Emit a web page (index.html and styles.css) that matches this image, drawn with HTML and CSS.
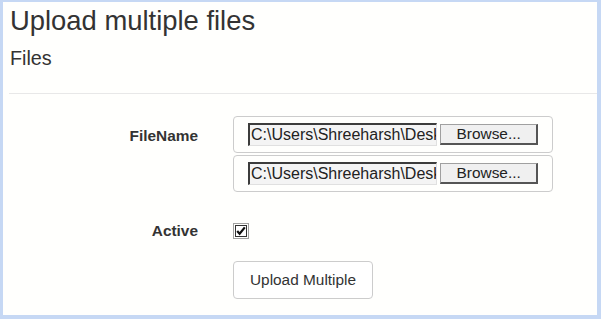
FILE: index.html
```html
<!DOCTYPE html>
<html lang="en">
<head>
    <meta charset="UTF-8">
    <title>Upload multiple files</title>
    <link rel="stylesheet" href="styles.css">
</head>
<body>
    <div class="frame">
        <h3 class="title">Upload multiple files</h3>
        <h4 class="subtitle">Files</h4>
        <hr class="rule">

        <div class="form-row files-row">
            <label class="form-label files-label">FileName</label>
            <div class="controls">
                <div class="file-box">
                    <span class="file-path">C:\Users\Shreeharsh\Desk</span>
                    <span class="browse-btn">Browse...</span>
                </div>
                <div class="file-box">
                    <span class="file-path">C:\Users\Shreeharsh\Desk</span>
                    <span class="browse-btn">Browse...</span>
                </div>
            </div>
        </div>

        <div class="form-row active-row">
            <label class="form-label">Active</label>
            <div class="controls">
                <svg class="check" width="16" height="16" viewBox="0 0 16 16">
                    <rect x="0.5" y="0.5" width="15" height="15" fill="none" stroke="#444" stroke-dasharray="1 1"/>
                    <rect x="2.5" y="2.5" width="11" height="11" fill="#fff" stroke="#333"/>
                    <path d="M4.2 8 L6.6 10.8 L11.8 4.4" fill="none" stroke="#111" stroke-width="2.2"/>
                </svg>
            </div>
        </div>

        <div class="form-row submit-row">
            <div class="form-label"></div>
            <div class="controls">
                <button class="upload-btn">Upload Multiple</button>
            </div>
        </div>
    </div>
</body>
</html>
```

FILE: styles.css
```css
body {
    margin: 0;
    font-family: 'Liberation Sans', Arial, sans-serif;
    color: #333;
    background-color: #fff;
}
.frame {
    box-sizing: border-box;
    width: 601px;
    height: 319px;
    border-style: solid;
    border-color: #c6d8f4;
    border-width: 2px 4px 4px 3px;
    background-color: #fffffd;
    overflow: hidden;
}
.title {
    margin: 4px 0 0 7px;
    font-size: 27.4px;
    font-weight: normal;
    line-height: 1.1;
}
.subtitle {
    margin: 12px 0 0 7px;
    font-size: 19.8px;
    font-weight: normal;
    line-height: 1.1;
}
.rule {
    margin: 23px 0 0 6px;
    border: 0;
    border-top: 1px solid #e8e8e8;
}
.form-row {
    display: flex;
    align-items: flex-start;
}
.form-label {
    width: 195px;
    flex: none;
    text-align: right;
    font-weight: bold;
    font-size: 15.4px;
}
.files-label {
    margin-top: 11px;
}
.controls {
    margin-left: 35px;
    display: flex;
    flex-direction: column;
    gap: 2px;
}
.files-row {
    margin-top: 22px;
}
.file-box {
    box-sizing: border-box;
    width: 320px;
    height: 37px;
    border: 1px solid #ccc;
    border-radius: 4px;
    padding: 0 14px;
    display: flex;
    align-items: center;
    gap: 3px;
}
.file-path {
    box-sizing: border-box;
    width: 190px;
    height: 23px;
    line-height: 20px;
    font-size: 16px;
    color: #222;
    white-space: nowrap;
    overflow: hidden;
    background-color: #f4f4f4;
    border-style: solid;
    border-width: 2px 1px 1px 2px;
    border-color: #3c3c3c #e0e0e0 #e0e0e0 #3c3c3c;
    padding-left: 1px;
}
.browse-btn {
    box-sizing: border-box;
    width: 98px;
    height: 21px;
    line-height: 18px;
    text-align: center;
    font-size: 15.4px;
    color: #222;
    background-color: #f0f0f0;
    border-style: solid;
    border-width: 1px 2px 2px 1px;
    border-color: #a0a0a0 #555 #555 #a0a0a0;
}
.active-row {
    margin-top: 30px;
    align-items: center;
}
.check {
    display: block;
}
.submit-row {
    margin-top: 21px;
}
.upload-btn {
    box-sizing: border-box;
    height: 38px;
    width: 140px;
    font-family: 'Liberation Sans', Arial, sans-serif;
    font-size: 15.4px;
    color: #333;
    background-color: #fff;
    border: 1px solid #ccc;
    border-radius: 4px;
    padding: 0;
}
```
